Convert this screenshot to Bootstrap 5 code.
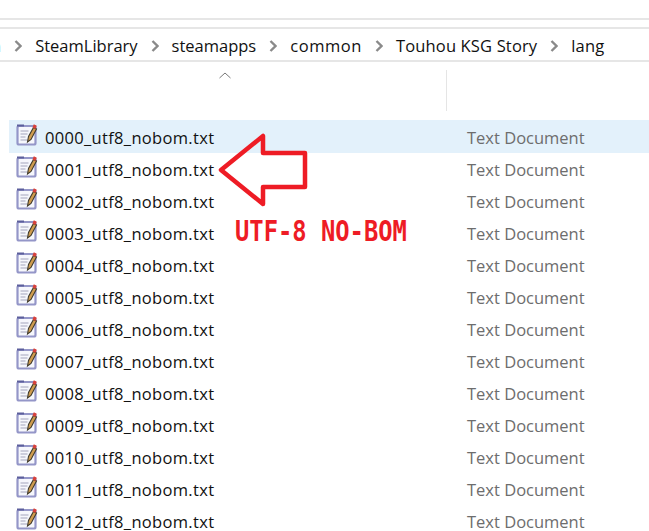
<!DOCTYPE html>
<html lang="en">
<head>
  <meta charset="UTF-8">
  <title>lang</title>
  <link href="https://cdn.jsdelivr.net/npm/bootstrap@5.3.0/dist/css/bootstrap.min.css" rel="stylesheet">
  <style>
    html, body { height: 100%; }
    body { overflow: hidden; background: #fff; font-family: "Open Sans", "Noto Sans", sans-serif; font-size: 16.5px; color: #111; }
    .shot { width: 649px; height: 531px; overflow: hidden; }
    .top-gap { height: 20px; border-bottom: 2px solid #e6e6e6; }
    .crumbs { margin-top: 7px; height: 35px; padding-top: 3px; border-top: 2px solid #e6e6e6; border-bottom: 2px solid #e6e6e6; margin-left: -9px; white-space: nowrap; }
    .crumb-sep { width: 34px; }
    .crumb-wide { letter-spacing: .55px; }
    .crumb-mid { letter-spacing: .15px; }
    .head-row { height: 58px; }
    .sort-mark { width: 446px; padding-left: 219px; padding-top: 10px; }
    .col-line { width: 1px; height: 41px; margin-top: 8px; background: #e5e5e5; }
    .file-list { margin-left: 9px; }
    .file-row { height: 32px; }
    .file-row.sel { background: #e3f1fb; height: 33px; margin-bottom: -1px; }
    .file-icon { width: 22px; height: 23px; margin-left: 7px; margin-right: 7px; margin-top: -4px; flex: none; }
    .file-name { width: 422px; flex: none; padding-top: 4px; letter-spacing: .32px; }
    .file-type { color: #6d6d6d; padding-top: 4px; }
    .note-arrow { position: absolute; left: 216px; top: 132px; }
    .note-text { position: absolute; left: 235px; top: 215px; color: #ee1c25; font-family: "DejaVu Sans Mono", monospace; font-weight: 700; font-size: 23.800px; line-height: 28px; transform: scaleY(1.2); transform-origin: left top; white-space: nowrap; }
  </style>
</head>
<body>
<svg width="0" height="0" class="position-absolute">
  <symbol id="note" viewBox="0 0 22 23">
    <rect x="1.500" y="3" width="18" height="18.500" rx="1.500" fill="#f6f7fc" stroke="#9496c8" stroke-width="2.200"/>
    <path d="M1 2.500h7" stroke="#5c5f9c" stroke-width="2"/>
    <path d="M4.500 8h8M4.500 11h7M4.500 14h5M4.500 17h7" stroke="#a4a6bc" stroke-width="1.200"/>
    <path d="M12.500 13.500l-1 5.500 3.500-2.500 5.500-10.500-3-1.500z" fill="#cf9c4e" stroke="#3f3a2c" stroke-width="1.100"/>
    <path d="M17.800 1.200l3 1.500-1.300 3.300-3-1.500z" fill="#d8413a"/>
  </symbol>
</svg>

<div class="shot position-relative">
  <div class="top-gap"></div>
  <div class="crumbs d-flex align-items-center">
    <span>n</span>
    <span class="crumb-sep d-flex justify-content-center"><svg width="8" height="12" viewBox="0 0 8 12"><path d="M1.500 1l5 5-5 5" fill="none" stroke="#8a8a8a" stroke-width="2.400"/></svg></span>
    <span>SteamLibrary</span>
    <span class="crumb-sep d-flex justify-content-center"><svg width="8" height="12" viewBox="0 0 8 12"><path d="M1.500 1l5 5-5 5" fill="none" stroke="#8a8a8a" stroke-width="2.400"/></svg></span>
    <span>steamapps</span>
    <span class="crumb-sep d-flex justify-content-center"><svg width="8" height="12" viewBox="0 0 8 12"><path d="M1.500 1l5 5-5 5" fill="none" stroke="#8a8a8a" stroke-width="2.400"/></svg></span>
    <span class="crumb-wide">common</span>
    <span class="crumb-sep d-flex justify-content-center"><svg width="8" height="12" viewBox="0 0 8 12"><path d="M1.500 1l5 5-5 5" fill="none" stroke="#8a8a8a" stroke-width="2.400"/></svg></span>
    <span class="crumb-mid">Touhou KSG Story</span>
    <span class="crumb-sep d-flex justify-content-center"><svg width="8" height="12" viewBox="0 0 8 12"><path d="M1.500 1l5 5-5 5" fill="none" stroke="#8a8a8a" stroke-width="2.400"/></svg></span>
    <span class="crumb-mid">lang</span>
  </div>
  <div class="head-row d-flex">
    <div class="sort-mark"><svg class="d-block" width="12" height="7" viewBox="0 0 12 7"><path d="M.5 6l5.500-5 5.500 5" fill="none" stroke="#777" stroke-width="1"/></svg></div>
    <div class="col-line"></div>
  </div>
  <div class="file-list" id="files"></div>

  <svg class="note-arrow" width="94" height="76" viewBox="0 0 94 76">
    <path d="M5 38L47 4v17h42v34H47v17z" fill="none" stroke="#ee1c25" stroke-width="4.500" stroke-linejoin="round"/>
  </svg>
  <div class="note-text">UTF-8 NO-BOM</div>
</div>

<script>
  const fileList = document.getElementById("files");
  for (let i = 0; i < 13; i++) {
    const row = document.createElement("div");
    row.className = "file-row d-flex align-items-center" + (i === 0 ? " sel" : "");
    const name = String(i).padStart(4, "0") + "_utf8_nobom.txt";
    row.innerHTML = `
      <svg class="file-icon"><use href="#note"></use></svg>
      <span class="file-name">${name}</span>
      <span class="file-type">Text Document</span>
    `;
    fileList.appendChild(row);
  }
</script>
<script src="https://cdn.jsdelivr.net/npm/bootstrap@5.3.0/dist/js/bootstrap.bundle.min.js"></script>
</body>
</html>
